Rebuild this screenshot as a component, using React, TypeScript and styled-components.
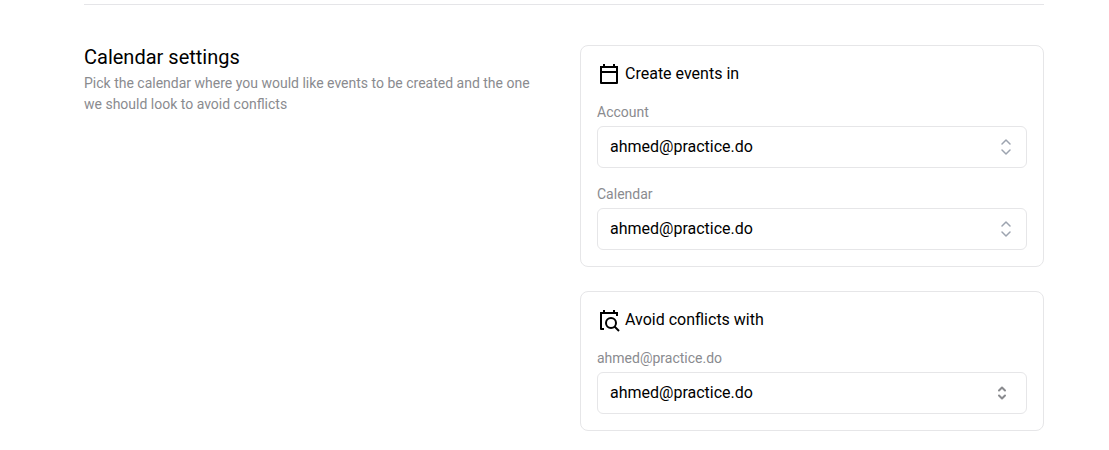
import React, { useId } from "react";
import styled, { createGlobalStyle } from "styled-components";

const GlobalStyle = createGlobalStyle`
  *, *::before, *::after { box-sizing: border-box; }
  body {
    margin: 0;
    background: #fff;
    color: #000;
    font-family: Roboto, "Liberation Sans", sans-serif;
    font-size: 16px;
    line-height: 24px;
    -webkit-font-smoothing: antialiased;
  }
`;

const Page = styled.main`
  padding: 4px 65px 19px 84px;
`;

const Section = styled.section`
  display: grid;
  grid-template-columns: repeat(2, minmax(0, 1fr));
  column-gap: 32px;
  align-items: start;
  padding-top: 40px;
  border-top: 1px solid #e5e5e8;
`;

const Title = styled.h2`
  margin: 0;
  font-size: 20px;
  font-weight: 400;
  line-height: 24px;
`;

const Description = styled.p`
  margin: 4px 0 0;
  color: #8a8b8f;
  font-size: 14px;
  line-height: 21px;
`;

const Cards = styled.div`
  display: flex;
  flex-direction: column;
  gap: 24px;
`;

const Card = styled.section`
  display: flex;
  flex-direction: column;
  gap: 16px;
  padding: 16px;
  border: 1px solid #e6e6e8;
  border-radius: 8px;
`;

const CardHeader = styled.header`
  display: flex;
  align-items: center;
  gap: 4px;
`;

const CardTitle = styled.h3`
  margin: 0;
  font-size: 16px;
  font-weight: 400;
  line-height: 24px;
`;

const FieldBlock = styled.div`
  display: flex;
  flex-direction: column;
  gap: 4px;
`;

const Label = styled.label`
  color: #8a8b8f;
  font-size: 14px;
  line-height: 20px;
`;

const SelectWrap = styled.div`
  position: relative;
  display: flex;
`;

const Select = styled.select`
  appearance: none;
  width: 100%;
  height: 42px;
  padding: 0 40px 0 12px;
  border: 1px solid #e6e6e8;
  border-radius: 6px;
  background: #fff;
  color: #000;
  font: inherit;
`;

const Arrows = styled.svg<{ $compact?: boolean }>`
  position: absolute;
  top: 50%;
  right: ${(p) => (p.$compact ? 17 : 11)}px;
  width: ${(p) => (p.$compact ? 16 : 20)}px;
  height: ${(p) => (p.$compact ? 16 : 20)}px;
  transform: translateY(-50%);
  fill: none;
  stroke: ${(p) => (p.$compact ? "#8a8b8f" : "#9ca3af")};
  stroke-width: ${(p) => (p.$compact ? 2 : 1.5)};
  stroke-linecap: round;
  stroke-linejoin: round;
  pointer-events: none;
`;

const Icon = styled.svg`
  flex: none;
  width: 24px;
  height: 24px;
`;

const CalendarIcon = () => (
  <Icon viewBox="0 0 24 24" aria-hidden="true">
    <path
      fillRule="evenodd"
      d="M6 2h2v2h8V2h2v2h3v17a1 1 0 0 1-1 1H4a1 1 0 0 1-1-1V4h3zM5 6v3h14V6zM5 11v9h14v-9z"
    />
  </Icon>
);

const CalendarSearchIcon = () => (
  <Icon viewBox="0 0 24 24" aria-hidden="true">
    <path d="M6 2h2v2h8V2h2v2h3v4h-2V6H5v14h2v2H4a1 1 0 0 1-1-1V4h3z" />
    <circle cx="14" cy="15" r="5" fill="none" stroke="#000" strokeWidth="2" />
    <path d="M17.5 18.5L22 23" fill="none" stroke="#000" strokeWidth="2" />
  </Icon>
);

type FieldProps = { label: string; value: string; compact?: boolean };

const Field = ({ label, value, compact }: FieldProps) => {
  const id = useId();
  return (
    <FieldBlock>
      <Label htmlFor={id}>{label}</Label>
      <SelectWrap>
        <Select id={id} defaultValue={value}>
          <option value={value}>{value}</option>
        </Select>
        {compact ? (
          <Arrows $compact viewBox="0 0 16 16" aria-hidden="true">
            <path d="M5 5.5l3-3 3 3M5 10.5l3 3 3-3" />
          </Arrows>
        ) : (
          <Arrows viewBox="0 0 20 20" aria-hidden="true">
            <path d="M6 7l4-4 4 4M6 13l4 4 4-4" />
          </Arrows>
        )}
      </SelectWrap>
    </FieldBlock>
  );
};

export default function App() {
  return (
    <>
      <GlobalStyle />
      <Page>
        <Section>
          <div>
            <Title>Calendar settings</Title>
            <Description>
              Pick the calendar where you would like events to be created and
              the one we should look to avoid conflicts
            </Description>
          </div>
          <Cards>
            <Card>
              <CardHeader>
                <CalendarIcon />
                <CardTitle>Create events in</CardTitle>
              </CardHeader>
              <Field label="Account" value="ahmed@practice.do" />
              <Field label="Calendar" value="ahmed@practice.do" />
            </Card>
            <Card>
              <CardHeader>
                <CalendarSearchIcon />
                <CardTitle>Avoid conflicts with</CardTitle>
              </CardHeader>
              <Field label="ahmed@practice.do" value="ahmed@practice.do" compact />
            </Card>
          </Cards>
        </Section>
      </Page>
    </>
  );
}
